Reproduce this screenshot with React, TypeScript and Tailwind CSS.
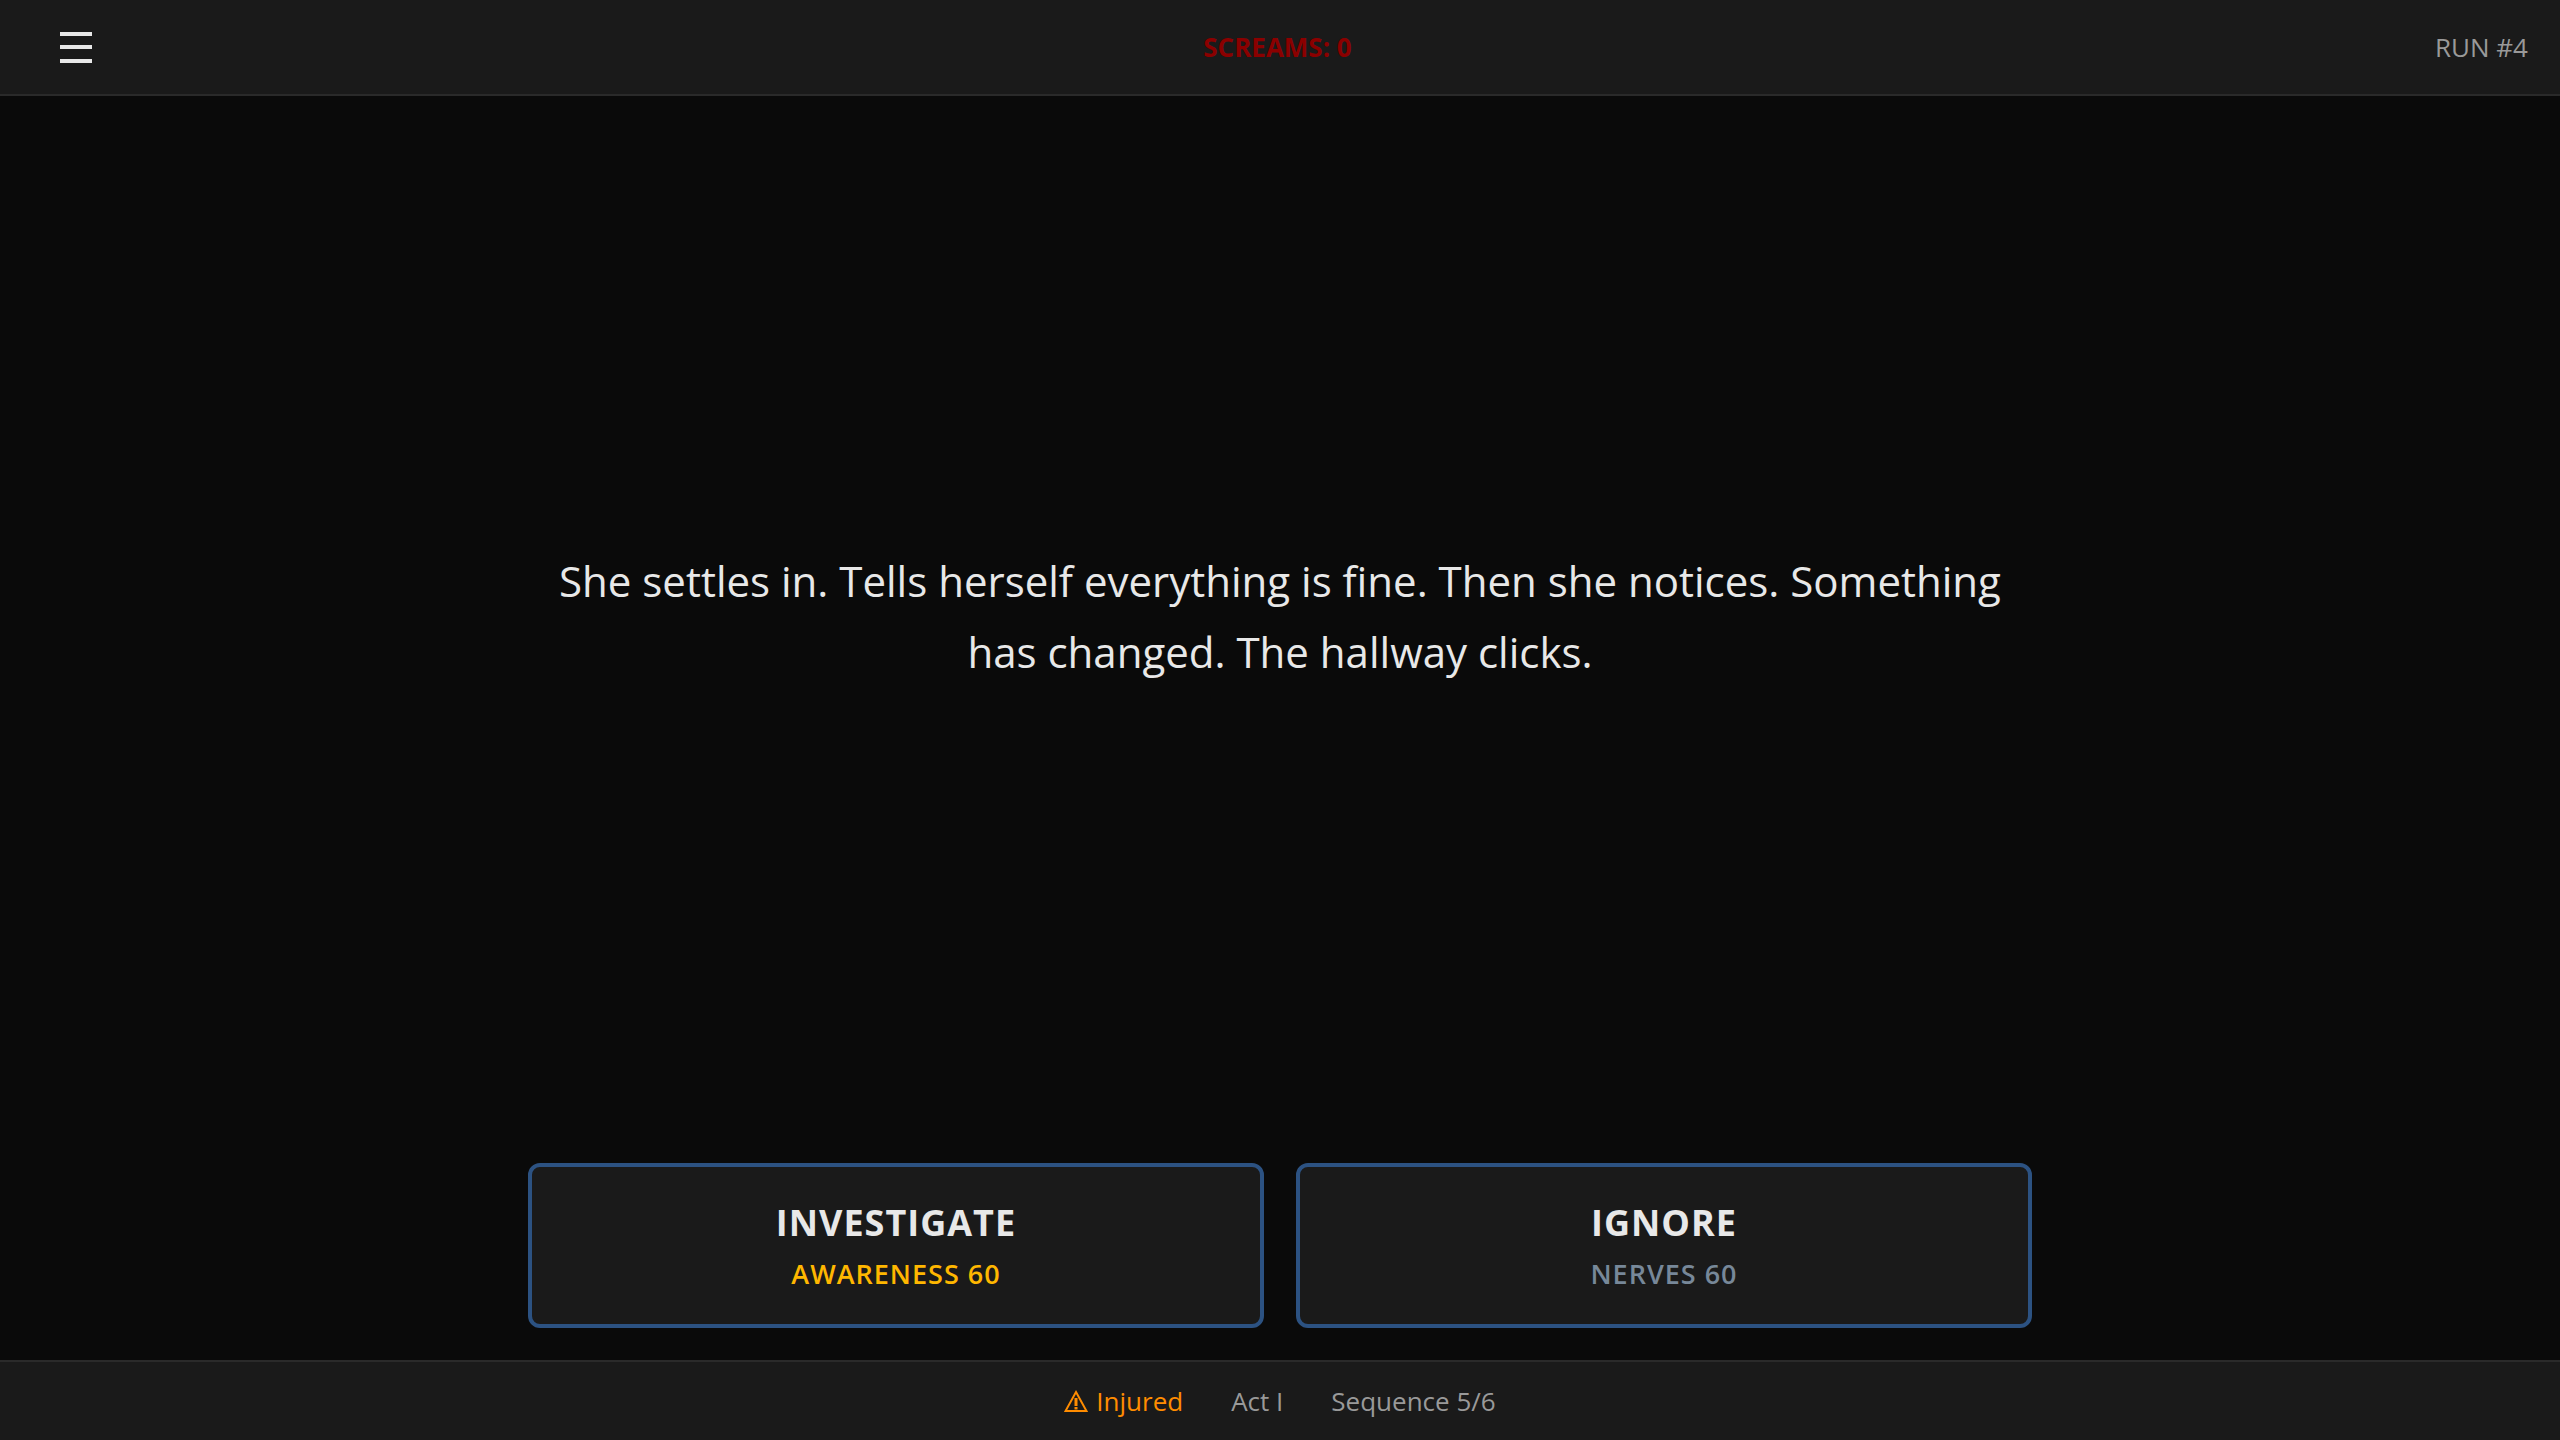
import React from 'react';

type Choice = {
  label: string;
  stat: string;
  statClass: string;
};

const choices: Choice[] = [
  { label: 'INVESTIGATE', stat: 'AWARENESS 60', statClass: 'text-[#ffb700]' },
  { label: 'IGNORE', stat: 'NERVES 60', statClass: 'text-[#778899]' },
];

function MenuIcon() {
  return (
    <svg width="32" height="32" viewBox="0 0 32 32" fill="currentColor" aria-hidden="true">
      <rect x="0" y="1" width="32" height="4" />
      <rect x="0" y="14" width="32" height="4" />
      <rect x="0" y="28" width="32" height="4" />
    </svg>
  );
}

function WarningIcon() {
  return (
    <svg width="24" height="24" viewBox="0 0 24 24" fill="none" stroke="currentColor" strokeWidth="2" aria-hidden="true">
      <path d="M12 3 L22.5 22 H1.5 Z" />
      <path d="M12 9 V17" strokeWidth="3" />
      <path d="M12 18 V20.5" strokeWidth="3" />
    </svg>
  );
}

export default function App() {
  return (
    <div className="min-h-screen flex flex-col bg-[#0a0a0a] text-[#e8e8e8] font-['Open_Sans',sans-serif]">
      <header className="h-24 px-8 flex items-center justify-between bg-[#1a1a1a] border-b-2 border-[#2a2a2a]">
        <button aria-label="Menu" className="w-22 h-16 flex items-center justify-center">
          <MenuIcon />
        </button>
        <div className="text-[26px] font-bold text-[#8b0000]">SCREAMS: 0</div>
        <div className="text-[26px] text-[#999999]">RUN #4</div>
      </header>

      <main className="flex-1 w-full max-w-[1568px] mx-auto px-8 pb-8 flex flex-col">
        <div className="flex-1 flex items-center justify-center pb-7">
          <p className="text-[42px] leading-[71px] text-center">
            She settles in. Tells herself everything is fine. Then she notices. Something has changed. The hallway clicks.
          </p>
        </div>

        <div className="grid grid-cols-2 gap-8">
          {choices.map((choice) => (
            <button
              key={choice.label}
              className="h-[165px] flex flex-col items-center justify-center gap-2 bg-[#1a1a1a] border-4 border-[#2c5282] rounded-xl"
            >
              <span className="text-[36px] leading-[48px] font-bold tracking-[1px]">{choice.label}</span>
              <span className={`text-[27px] leading-[38px] font-semibold tracking-[1px] ${choice.statClass}`}>
                {choice.stat}
              </span>
            </button>
          ))}
        </div>
      </main>

      <footer className="h-20 flex items-center justify-center gap-12 bg-[#1a1a1a] border-t-2 border-[#2a2a2a] text-[26px] text-[#999999]">
        <span className="flex items-center gap-2 text-[#ff8c00]">
          <WarningIcon />
          Injured
        </span>
        <span>Act I</span>
        <span>Sequence 5/6</span>
      </footer>
    </div>
  );
}
